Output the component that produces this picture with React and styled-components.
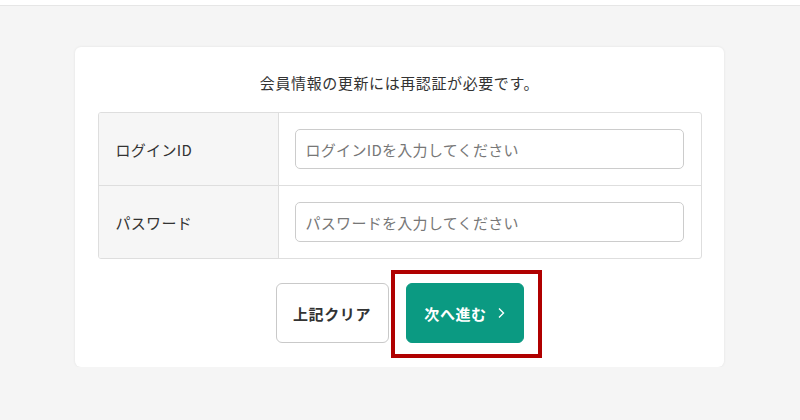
import React from 'react';
import styled, { createGlobalStyle } from 'styled-components';

const GlobalStyle = createGlobalStyle`
  html, body {
    margin: 0;
    padding: 0;
    background: #f5f5f5;
    font-family: 'Noto Sans CJK JP', 'Noto Sans', sans-serif;
    color: #333;
  }
`;

const TopBar = styled.div`
  height: 5px;
  background: #fff;
  border-bottom: 1px solid #e6e6e6;
`;

const Page = styled.main`
  display: flex;
  justify-content: center;
  padding: 41px 0 0 0;
  margin-left: -1px;
`;

const Card = styled.section`
  width: 649px;
  box-sizing: border-box;
  background: #fff;
  border-radius: 6px;
  box-shadow: 0 0 3px rgba(0, 0, 0, 0.08);
  padding: 24px 24px 24px;
  display: flex;
  flex-direction: column;
  align-items: center;
`;

const Lead = styled.p`
  margin: 0 0 17px;
  font-size: 15px;
  letter-spacing: 0.6px;
  line-height: 24px;
  color: #333;
`;

const Table = styled.div`
  width: 602px;
  border: 1px solid #dedede;
  border-radius: 3px;
  overflow: hidden;
`;

const Row = styled.div`
  display: grid;
  grid-template-columns: 180px 1fr;
  height: 72px;
  & + & {
    border-top: 1px solid #dedede;
  }
`;

const Label = styled.div`
  background: #f6f6f6;
  border-right: 1px solid #dedede;
  display: flex;
  align-items: center;
  padding-left: 17px;
  font-size: 15px;
  letter-spacing: 0.3px;
  color: #333;
`;

const Field = styled.div`
  display: flex;
  align-items: center;
  padding: 0 17px 0 16px;
`;

const Input = styled.input`
  width: 100%;
  height: 40px;
  box-sizing: border-box;
  border: 1px solid #cccccc;
  border-radius: 5px;
  padding: 0 10px;
  font-family: inherit;
  font-size: 15px;
  letter-spacing: 0.3px;
  color: #333;
  &::placeholder {
    color: #777;
  }
`;

const Actions = styled.div`
  display: flex;
  gap: 17px;
  margin-top: 24px;
`;

const Button = styled.button`
  position: relative;
  height: 60px;
  width: ${p => p.$w}px;
  box-sizing: border-box;
  border-radius: 6px;
  font-family: inherit;
  font-size: 15px;
  font-weight: 700;
  letter-spacing: 0.6px;
  cursor: pointer;
  border: 1px solid ${p => (p.$primary ? '#0b9a82' : '#c9c9c9')};
  background: ${p => (p.$primary ? '#0b9a82' : '#fff')};
  color: ${p => (p.$primary ? '#fff' : '#333')};
  display: flex;
  align-items: center;
  justify-content: center;
  gap: 10px;
`;

const Highlight = styled.span`
  position: absolute;
  left: -16px;
  right: -19px;
  top: -14px;
  bottom: -16px;
  border: 4px solid #b00000;
  pointer-events: none;
`;

const Chevron = () => (
  <svg width="8" height="12" viewBox="0 0 8 12" fill="none">
    <path d="M2 1.5 6.5 6 2 10.5" stroke="#fff" strokeWidth="1.4" />
  </svg>
);

export default function App() {
  return (
    <>
      <GlobalStyle />
      <TopBar />
      <Page>
        <Card>
          <Lead>会員情報の更新には再認証が必要です。</Lead>
          <Table>
            <Row>
              <Label>ログインID</Label>
              <Field>
                <Input type="text" placeholder="ログインIDを入力してください" />
              </Field>
            </Row>
            <Row>
              <Label>パスワード</Label>
              <Field>
                <Input type="password" placeholder="パスワードを入力してください" />
              </Field>
            </Row>
          </Table>
          <Actions>
            <Button $w={113}>上記クリア</Button>
            <Button $w={118} $primary>
              次へ進む <Chevron />
              <Highlight />
            </Button>
          </Actions>
        </Card>
      </Page>
    </>
  );
}
